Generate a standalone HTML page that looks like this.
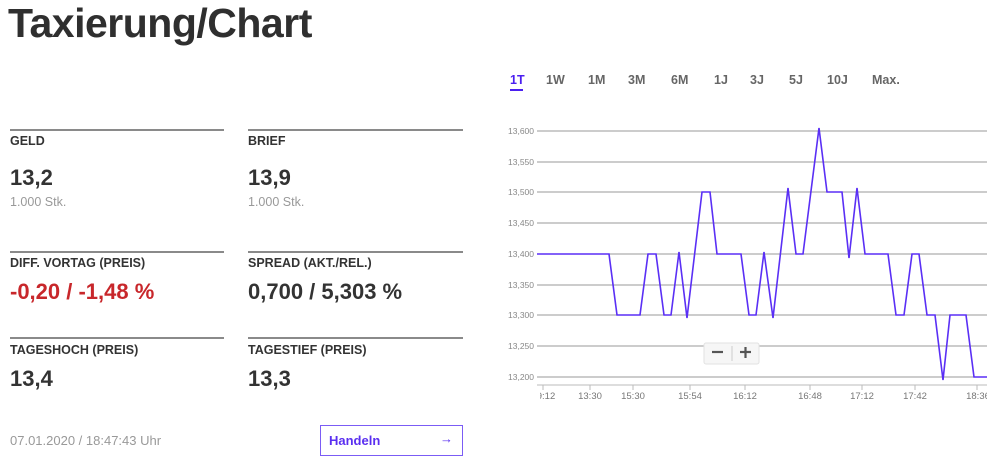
<!DOCTYPE html>
<html><head><meta charset="utf-8"><style>
*{margin:0;padding:0;box-sizing:border-box}
body{width:999px;height:463px;background:#fff;font-family:"Liberation Sans",sans-serif;color:#333;position:relative;overflow:hidden}
.a{position:absolute;white-space:nowrap}
h1{position:absolute;left:8px;top:0;font-size:41px;font-weight:bold;color:#2f2f2f;letter-spacing:-0.5px}
.ln{position:absolute;height:2px;background:#8a8a8a}
.lab{font-size:12.5px;font-weight:bold;color:#333}
.val{font-size:22px;font-weight:bold;color:#333}
.sub{font-size:12.5px;color:#999}
.tab{font-size:12.5px;font-weight:bold;color:#666;top:73px}
</style></head><body>
<h1>Taxierung/Chart</h1>
<div class="ln" style="left:10px;top:129px;width:214px"></div>
<div class="ln" style="left:248px;top:129px;width:215px"></div>
<div class="ln" style="left:10px;top:251px;width:214px"></div>
<div class="ln" style="left:248px;top:251px;width:215px"></div>
<div class="ln" style="left:10px;top:337px;width:214px"></div>
<div class="ln" style="left:248px;top:337px;width:215px"></div>
<div class="a lab" style="left:10px;top:134px">GELD</div>
<div class="a lab" style="left:248px;top:134px">BRIEF</div>
<div class="a val" style="left:10px;top:165px">13,2</div>
<div class="a val" style="left:248px;top:165px">13,9</div>
<div class="a sub" style="left:10px;top:195px">1.000 Stk.</div>
<div class="a sub" style="left:248px;top:195px">1.000 Stk.</div>
<div class="a lab" style="left:10px;top:256px">DIFF. VORTAG (PREIS)</div>
<div class="a lab" style="left:248px;top:256px">SPREAD (AKT./REL.)</div>
<div class="a val" style="left:10px;top:279px;color:#c8272b">-0,20 / -1,48 %</div>
<div class="a val" style="left:248px;top:279px">0,700 / 5,303 %</div>
<div class="a lab" style="left:10px;top:343px">TAGESHOCH (PREIS)</div>
<div class="a lab" style="left:248px;top:343px">TAGESTIEF (PREIS)</div>
<div class="a val" style="left:10px;top:366px">13,4</div>
<div class="a val" style="left:248px;top:366px">13,3</div>
<div class="a sub" style="left:10px;top:433px;font-size:13px">07.01.2020 / 18:47:43 Uhr</div>
<div class="a" style="left:320px;top:425px;width:143px;height:31px;border:1.5px solid #7b5cf5"></div>
<div class="a" style="left:329px;top:433px;font-size:13px;font-weight:bold;color:#5a2ff0">Handeln</div>
<div class="a" style="left:440px;top:431px;font-size:13px;color:#5a2ff0">→</div>
<div class="a tab" style="left:510px;color:#4b1ff0">1T</div>
<div class="a" style="left:510px;top:89px;width:13px;height:2px;background:#4b1ff0"></div>
<div class="a tab" style="left:546px">1W</div>
<div class="a tab" style="left:588px">1M</div>
<div class="a tab" style="left:628px">3M</div>
<div class="a tab" style="left:671px">6M</div>
<div class="a tab" style="left:714px">1J</div>
<div class="a tab" style="left:750px">3J</div>
<div class="a tab" style="left:789px">5J</div>
<div class="a tab" style="left:827px">10J</div>
<div class="a tab" style="left:872px">Max.</div>
<svg class="a" style="left:0;top:0" width="999" height="463">
<g stroke="#999" stroke-width="1">
<line x1="537" y1="131" x2="987" y2="131"/><line x1="537" y1="162" x2="987" y2="162"/>
<line x1="537" y1="192" x2="987" y2="192"/><line x1="537" y1="223" x2="987" y2="223"/>
<line x1="537" y1="254" x2="987" y2="254"/><line x1="537" y1="285" x2="987" y2="285"/>
<line x1="537" y1="315" x2="987" y2="315"/><line x1="537" y1="346" x2="987" y2="346"/>
<line x1="537" y1="377" x2="987" y2="377"/>
<line x1="537" y1="385" x2="987" y2="385" stroke="#bbb"/>
<g stroke="#bbb"><line x1="543" y1="385" x2="543" y2="390"/><line x1="590" y1="385" x2="590" y2="390"/><line x1="633" y1="385" x2="633" y2="390"/><line x1="690" y1="385" x2="690" y2="390"/><line x1="745" y1="385" x2="745" y2="390"/><line x1="810" y1="385" x2="810" y2="390"/><line x1="862" y1="385" x2="862" y2="390"/><line x1="915" y1="385" x2="915" y2="390"/><line x1="977" y1="385" x2="977" y2="390"/></g>
</g>
<g font-family="Liberation Sans,sans-serif" font-size="8.5" fill="#888" text-anchor="end">
<text x="534" y="134">13,600</text><text x="534" y="165">13,550</text><text x="534" y="195">13,500</text><text x="534" y="226">13,450</text><text x="534" y="257">13,400</text><text x="534" y="288">13,350</text><text x="534" y="318">13,300</text><text x="534" y="349">13,250</text><text x="534" y="380">13,200</text>
</g>
<g font-family="Liberation Sans,sans-serif" font-size="9.5" fill="#777" text-anchor="middle">
<text x="546" y="399">9:12</text><text x="590" y="399">13:30</text><text x="633" y="399">15:30</text><text x="690" y="399">15:54</text><text x="745" y="399">16:12</text><text x="810" y="399">16:48</text><text x="862" y="399">17:12</text><text x="915" y="399">17:42</text><text x="978" y="399">18:36</text>
</g>
<rect x="987" y="380" width="12" height="25" fill="#fff"/>
<rect x="536" y="388" width="4" height="15" fill="#fff"/>
<polyline fill="none" stroke="#5a2ff5" stroke-width="1.6" stroke-linejoin="miter" points="537,254 609,254 617,315 640,315 648,254 656,254 664,315 671,315 679,252 687,318 702,192 710,192 717,254 741,254 749,315 756,315 764,252 773,318 788,188 796,254 803,254 819,128 827,192 842,192 849,258 857,188 865,254 888,254 896,315 904,315 912,254 919,254 927,315 935,315 943,380 950,315 966,315 974,377 987,377"/>
<rect x="704" y="343" width="55" height="21" rx="2" fill="#f6f6f6" stroke="#e2e2e2"/>
<line x1="732" y1="346" x2="732" y2="361" stroke="#ccc"/>
<g stroke="#555" stroke-width="2.2"><line x1="712" y1="352" x2="723" y2="352"/><line x1="740" y1="352" x2="751" y2="352"/><line x1="745.5" y1="347" x2="745.5" y2="358"/></g>
</svg>
</body></html>
